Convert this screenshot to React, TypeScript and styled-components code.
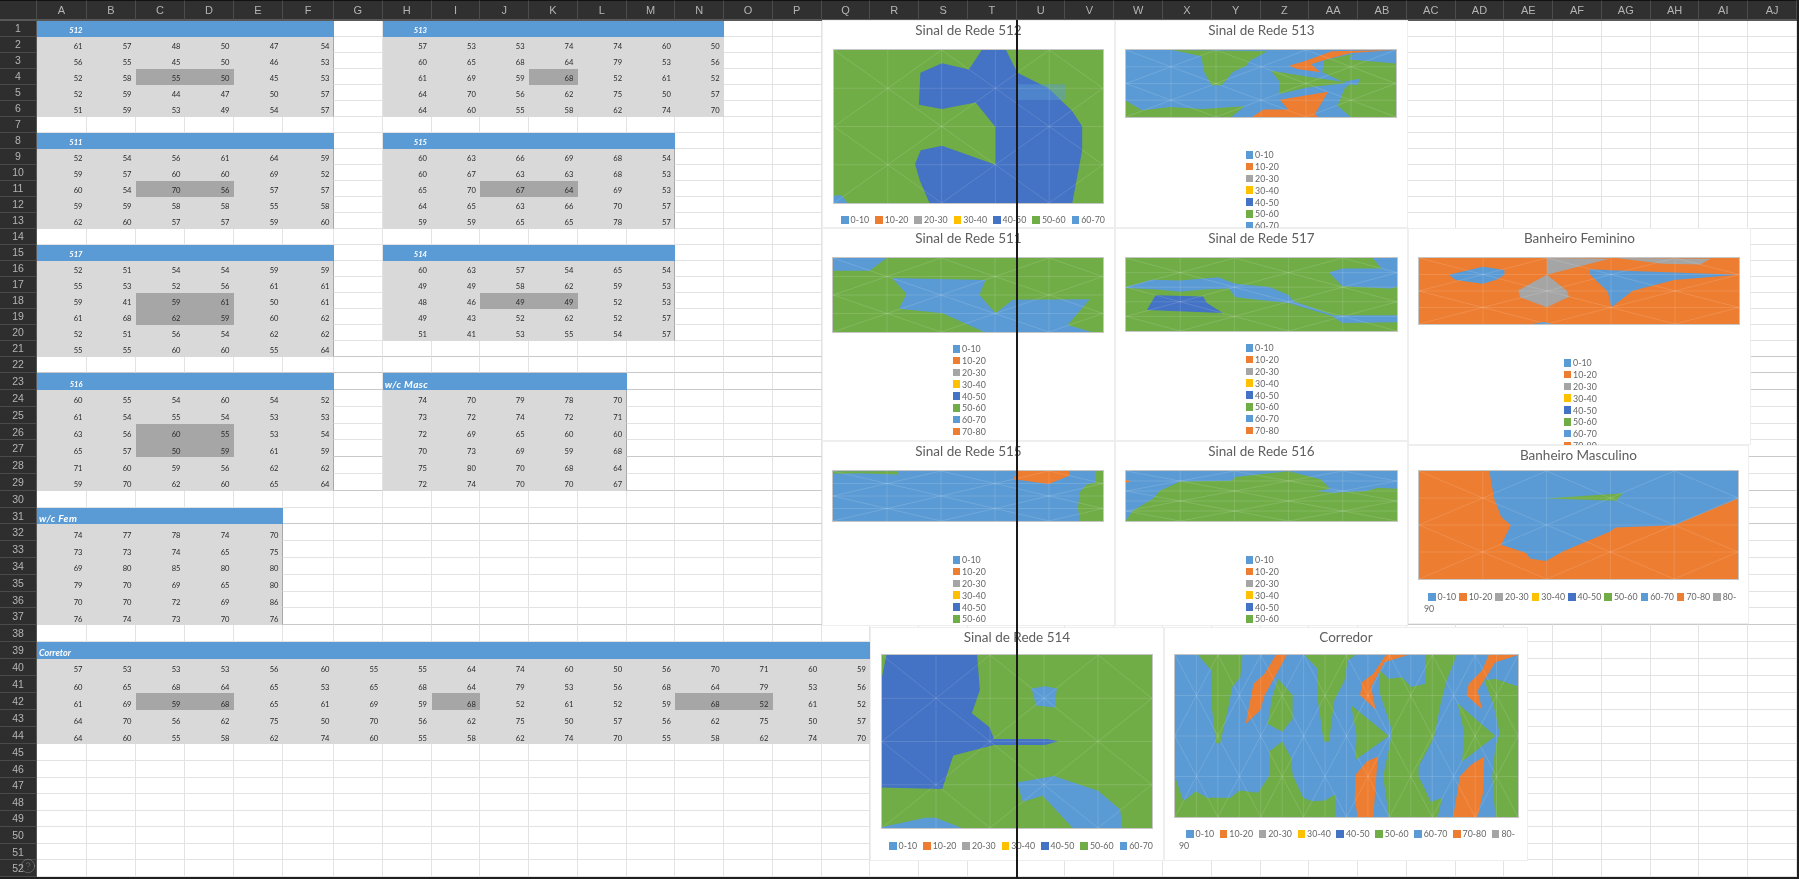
import React from 'react';
import styled, { createGlobalStyle } from 'styled-components';
import { CircleHelp } from 'lucide-react';

type Tone = 'blank' | 'band' | 'data' | 'mark';

type Block = {
  label: string;
  row: number;
  col: number;
  labelLeft?: boolean;
  labelSize?: number;
  labelSpacing?: number;
  edge?: boolean;
  values: number[][];
  marks: [number, number][];
};

type Shape = { fill: string; points: string; opacity?: number };

type ChartSpec = {
  title: string;
  x: number;
  y: number;
  w: number;
  h: number;
  plot: { x: number; y: number; w: number; h: number };
  view: [number, number, number, number];
  cells: [number, number];
  background: string;
  shapes: Shape[];
  legend: { top: number; x?: number; count: number; gap?: number; indent?: number; right?: number };
};

const BLUE = '#5b9bd5';
const ORANGE = '#ed7d31';
const GREY = '#a5a5a5';
const GOLD = '#ffc000';
const NAVY = '#4472c4';
const GREEN = '#70ad47';

const COLUMNS = Array.from({ length: 36 }, (_, i) =>
  i < 26 ? String.fromCharCode(65 + i) : 'A' + String.fromCharCode(65 + i - 26),
);
const ROW_COUNT = 52;
const HEAVY_ROWS = [21, 22, 23, 27, 29, 31, 37];

const LEGEND: [string, string][] = [
  ['0-10', BLUE],
  ['10-20', ORANGE],
  ['20-30', GREY],
  ['30-40', GOLD],
  ['40-50', NAVY],
  ['50-60', GREEN],
  ['60-70', BLUE],
  ['70-80', ORANGE],
  ['80-90', GREY],
];

const BLOCKS: Block[] = [
  {
    label: '512', row: 1, col: 1, edge: true, marks: [[2, 2], [2, 3]],
    values: [
      [61, 57, 48, 50, 47, 54],
      [56, 55, 45, 50, 46, 53],
      [52, 58, 55, 50, 45, 53],
      [52, 59, 44, 47, 50, 57],
      [51, 59, 53, 49, 54, 57],
    ],
  },
  {
    label: '513', row: 1, col: 8, marks: [[2, 3]],
    values: [
      [57, 53, 53, 74, 74, 60, 50],
      [60, 65, 68, 64, 79, 53, 56],
      [61, 69, 59, 68, 52, 61, 52],
      [64, 70, 56, 62, 75, 50, 57],
      [64, 60, 55, 58, 62, 74, 70],
    ],
  },
  {
    label: '511', row: 8, col: 1, edge: true, marks: [[2, 2], [2, 3]],
    values: [
      [52, 54, 56, 61, 64, 59],
      [59, 57, 60, 60, 69, 52],
      [60, 54, 70, 56, 57, 57],
      [59, 59, 58, 58, 55, 58],
      [62, 60, 57, 57, 59, 60],
    ],
  },
  {
    label: '515', row: 8, col: 8, edge: true, marks: [[2, 2], [2, 3]],
    values: [
      [60, 63, 66, 69, 68, 54],
      [60, 67, 63, 63, 68, 53],
      [65, 70, 67, 64, 69, 53],
      [64, 65, 63, 66, 70, 57],
      [59, 59, 65, 65, 78, 57],
    ],
  },
  {
    label: '517', row: 15, col: 1, edge: true, marks: [[2, 2], [2, 3], [3, 2], [3, 3]],
    values: [
      [52, 51, 54, 54, 59, 59],
      [55, 53, 52, 56, 61, 61],
      [59, 41, 59, 61, 50, 61],
      [61, 68, 62, 59, 60, 62],
      [52, 51, 56, 54, 62, 62],
      [55, 55, 60, 60, 55, 64],
    ],
  },
  {
    label: '514', row: 15, col: 8, edge: true, marks: [[2, 2], [2, 3]],
    values: [
      [60, 63, 57, 54, 65, 54],
      [49, 49, 58, 62, 59, 53],
      [48, 46, 49, 49, 52, 53],
      [49, 43, 52, 62, 52, 57],
      [51, 41, 53, 55, 54, 57],
    ],
  },
  {
    label: '516', row: 23, col: 1, edge: true, marks: [[2, 2], [2, 3], [3, 2], [3, 3]],
    values: [
      [60, 55, 54, 60, 54, 52],
      [61, 54, 55, 54, 53, 53],
      [63, 56, 60, 55, 53, 54],
      [65, 57, 50, 59, 61, 59],
      [71, 60, 59, 56, 62, 62],
      [59, 70, 62, 60, 65, 64],
    ],
  },
  {
    label: 'w/c Masc', row: 23, col: 8, labelLeft: true, labelSize: 10, labelSpacing: 0.4, edge: true, marks: [],
    values: [
      [74, 70, 79, 78, 70],
      [73, 72, 74, 72, 71],
      [72, 69, 65, 60, 60],
      [70, 73, 69, 59, 68],
      [75, 80, 70, 68, 64],
      [72, 74, 70, 70, 67],
    ],
  },
  {
    label: 'w/c Fem', row: 31, col: 1, labelLeft: true, labelSize: 10, labelSpacing: 0.4, edge: true, marks: [],
    values: [
      [74, 77, 78, 74, 70],
      [73, 73, 74, 65, 75],
      [69, 80, 85, 80, 80],
      [79, 70, 69, 65, 80],
      [70, 70, 72, 69, 86],
      [76, 74, 73, 70, 76],
    ],
  },
  {
    label: 'Corretor', row: 39, col: 1, labelLeft: true, labelSize: 9,
    marks: [[2, 2], [2, 3], [2, 8], [2, 13], [2, 14]],
    values: [
      [57, 53, 53, 53, 56, 60, 55, 55, 64, 74, 60, 50, 56, 70, 71, 60, 59],
      [60, 65, 68, 64, 65, 53, 65, 68, 64, 79, 53, 56, 68, 64, 79, 53, 56],
      [61, 69, 59, 68, 65, 61, 69, 59, 68, 52, 61, 52, 59, 68, 52, 61, 52],
      [64, 70, 56, 62, 75, 50, 70, 56, 62, 75, 50, 57, 56, 62, 75, 50, 57],
      [64, 60, 55, 58, 62, 74, 60, 55, 58, 62, 74, 70, 55, 58, 62, 74, 70],
    ],
  },
];

const CHARTS: ChartSpec[] = [
  {
    title: 'Sinal de Rede 512', x: 822, y: 20, w: 293, h: 208,
    plot: { x: 833, y: 49, w: 271, h: 155 }, view: [59, 146, 710, 464], cells: [5, 4],
    background: GREEN,
    shapes: [
      { fill: NAVY, points: '449,146 513,146 543,215 625,262 687,330 714,378 714,450 688,610 311,610 285,540 273,492 288,450 344,436 484,493 484,378 433,305 344,325 283,312 287,215 344,186 415,205' },
      { fill: BLUE, points: '59,588 78,586 95,610 59,610' },
      { fill: BLUE, opacity: 0.45, points: '540,250 670,250 670,298 540,298' },
    ],
    legend: { top: 220, x: 841, count: 7, gap: 6 },
  },
  {
    title: 'Sinal de Rede 513', x: 1115, y: 20, w: 293, h: 208,
    plot: { x: 1125, y: 49, w: 272, h: 69 }, view: [823, 146, 711, 207], cells: [6, 4],
    background: BLUE,
    shapes: [
      { fill: GREEN, points: '945,146 1195,150 1148,180 1140,195 1105,213 1075,255 1048,255 1027,210 1022,165' },
      { fill: GREEN, points: '1205,210 1300,228 1410,247 1300,262 1225,282 1228,245' },
      { fill: GREEN, points: '1345,178 1420,158 1410,175 1534,188 1534,353 1415,353 1380,318 1400,262 1440,235 1395,245 1340,215' },
      { fill: BLUE, points: '1395,245 1440,235 1432,255 1410,250' },
      { fill: GREEN, points: '823,303 865,332 940,322 1025,328 1135,320 1100,353 823,353' },
      { fill: ORANGE, points: '1252,195 1295,180 1365,150 1534,146 1415,155 1350,175 1310,190 1335,215 1275,205' },
      { fill: ORANGE, points: '1228,300 1355,275 1320,345 1330,353 1155,353 1185,330 1250,330' },
    ],
    legend: { top: 155, count: 8 },
  },
  {
    title: 'Sinal de Rede 511', x: 822, y: 228, w: 293, h: 213,
    plot: { x: 832, y: 257, w: 272, h: 76 }, view: [31, 110, 712, 230], cells: [5, 4],
    background: GREEN,
    shapes: [
      { fill: BLUE, points: '31,110 172,110 128,150 31,150' },
      { fill: BLUE, points: '187,172 433,178 417,225 460,282 505,240 708,238 650,318 713,340 430,340 320,282 205,268 225,222' },
    ],
    legend: { top: 349, count: 8 },
  },
  {
    title: 'Sinal de Rede 517', x: 1115, y: 228, w: 293, h: 213,
    plot: { x: 1125, y: 257, w: 273, h: 75 }, view: [797, 110, 714, 227], cells: [5, 5],
    background: GREEN,
    shapes: [
      { fill: BLUE, points: '1447,110 1511,110 1511,200 1495,205 1367,198 1332,155 1367,143 1470,143' },
      { fill: BLUE, points: '797,200 865,178 940,180 1040,170 1085,190 1175,200 1225,225 1240,245 1345,288 1511,288 1511,310 1367,312 1340,290 1225,250 1085,232 1068,205 1000,208 940,215 880,208 797,203' },
      { fill: NAVY, points: '875,226 1000,230 1010,250 1052,281 852,272' },
    ],
    legend: { top: 348, count: 8 },
  },
  {
    title: 'Sinal de Rede 515', x: 822, y: 441, w: 293, h: 185,
    plot: { x: 832, y: 470, w: 272, h: 52 }, view: [31, 749, 712, 158], cells: [5, 4],
    background: BLUE,
    shapes: [
      { fill: GREEN, points: '31,750 200,750 205,760 100,756 31,758' },
      { fill: ORANGE, points: '515,749 655,749 655,763 600,790 507,775' },
      { fill: GREEN, points: '722,749 743,749 743,907 682,907 677,865 682,815 700,792 722,785' },
    ],
    legend: { top: 560, count: 8 },
  },
  {
    title: 'Sinal de Rede 516', x: 1115, y: 441, w: 293, h: 185,
    plot: { x: 1125, y: 470, w: 273, h: 52 }, view: [797, 749, 714, 158], cells: [5, 5],
    background: GREEN,
    shapes: [
      { fill: BLUE, points: '797,749 1511,749 1511,805 1460,802 1430,812 1340,818 1300,812 1335,805 1310,775 1225,750 1085,768 1075,780 940,782 885,812 870,835 815,875 797,905' },
      { fill: ORANGE, points: '797,777 810,781 797,786' },
    ],
    legend: { top: 560, count: 8 },
  },
  {
    title: 'Banheiro Feminino', x: 1408, y: 228, w: 343, h: 217,
    plot: { x: 1418, y: 257, w: 322, h: 68 }, view: [55, 170, 966, 205], cells: [5, 4],
    background: ORANGE,
    shapes: [
      { fill: GREY, points: '441,170 630,172 441,222' },
      { fill: GREY, points: '650,170 935,172 905,190 790,188' },
      { fill: GREY, points: '441,222 500,270 508,290 441,323 360,292 355,270' },
      { fill: BLUE, points: '145,222 248,197 313,207 313,222 290,237 248,250 165,238' },
      { fill: BLUE, points: '570,205 635,208 1018,222 825,238 700,272 636,323 625,275 572,222' },
      { fill: BLUE, points: '395,375 433,369 458,375' },
    ],
    legend: { top: 363, count: 8 },
  },
  {
    title: 'Banheiro Masculino', x: 1408, y: 445, w: 341, h: 179,
    plot: { x: 1418, y: 470, w: 321, h: 110 }, view: [55, 809, 962, 331], cells: [5, 4],
    background: ORANGE,
    shapes: [
      { fill: BLUE, points: '267,809 1017,809 1017,893 825,975 648,982 630,995 490,1055 438,1085 390,1077 378,1060 303,1035 332,975 303,950 282,895' },
      { fill: GREEN, points: '438,893 670,877 650,900' },
    ],
    legend: { top: 597, x: 1424, count: 9, gap: 3, indent: 4, right: 11 },
  },
  {
    title: 'Sinal de Rede 514', x: 870, y: 627, w: 294, h: 234,
    plot: { x: 881, y: 654, w: 272, h: 175 }, view: [47, 103, 610, 525], cells: [5, 4],
    background: GREEN,
    shapes: [
      { fill: NAVY, points: '57,103 262,103 268,210 250,280 290,322 300,358 420,358 445,365 415,376 300,376 208,408 183,510 47,505 47,170' },
      { fill: BLUE, points: '385,205 415,198 442,205 437,262 395,256' },
      { fill: BLUE, points: '352,490 435,470 535,515 585,572 590,628 478,628 410,530 365,548' },
      { fill: BLUE, points: '47,625 145,597 168,597 228,628 47,628' },
    ],
    legend: { top: 846, x: 889, count: 7, gap: 6 },
  },
  {
    title: 'Corredor', x: 1164, y: 627, w: 364, h: 234,
    plot: { x: 1174, y: 654, w: 345, h: 164 }, view: [703, 103, 773, 490], cells: [16, 4],
    background: BLUE,
    shapes: [
      { fill: GREEN, points: '755,103 855,103 850,170 832,200 825,250 805,370 795,370 785,250 785,150' },
      { fill: GREEN, points: '703,470 722,545 750,515 775,535 828,535 848,513 890,520 915,470 915,395 945,365 965,415 968,465 992,535 1012,545 1040,543 1065,525 1065,593 703,593' },
      { fill: GREEN, points: '935,175 968,225 968,295 945,335 912,312 922,230' },
      { fill: GREEN, points: '995,103 1110,103 1092,120 1085,180 1062,240 1050,365 1038,365 1025,240 1025,145' },
      { fill: GREEN, points: '1100,255 1185,348 1110,420 1112,345' },
      { fill: GREEN, points: '1165,150 1185,175 1215,170 1235,200 1268,190 1268,103 1338,103 1315,180 1300,260 1288,345 1282,365 1252,440 1252,470 1280,548 1305,535 1295,593 1185,593 1172,470 1188,370 1192,330 1165,220' },
      { fill: GREEN, points: '1340,250 1425,348 1350,425 1355,340' },
      { fill: GREEN, points: '1400,180 1425,175 1476,198 1476,593 1425,593 1418,470 1425,380 1435,340 1420,250' },
      { fill: ORANGE, points: '930,103 955,103 905,225 895,270 862,312 880,190 905,160' },
      { fill: ORANGE, points: '1178,103 1228,103 1175,125 1145,200 1155,268 1120,225 1125,185 1150,160' },
      { fill: ORANGE, points: '1160,410 1155,500 1150,593 1115,593 1108,540 1110,465 1135,425' },
      { fill: ORANGE, points: '1410,103 1476,103 1425,125 1385,210 1395,268 1360,225 1365,190 1395,150' },
      { fill: ORANGE, points: '1400,410 1398,515 1385,593 1330,593 1345,470 1370,435' },
    ],
    legend: { top: 834, x: 1179, count: 9, gap: 5.6, indent: 7 },
  },
];

const GlobalStyle = createGlobalStyle`
  html, body {
    margin: 0;
    background: #2b2b2b;
    overflow: hidden;
  }
`;

const Sheet = styled.div`
  position: relative;
  width: 1799px;
  height: 879px;
  overflow: hidden;
  background: #1f1f1f;
  font-family: Lato, "Liberation Sans", sans-serif;
  filter: blur(0.35px);
`;

const Grid = styled.div`
  display: grid;
  grid-template-columns: 37px 50px repeat(4, 49px) 51px repeat(30, 48.77px);
  grid-template-rows: 20.5px repeat(21, 16px) repeat(18, 16.8px) repeat(5, 17.1px) repeat(8, 16.6px);
`;

const Corner = styled.div`
  background: #2f2f2f;
  border-top: 1px solid #111;
  border-right: 1px solid #4c4c4c;
  border-bottom: 2px solid #585858;
`;

const ColumnHead = styled.div`
  display: flex;
  align-items: center;
  justify-content: center;
  background: #303030;
  border-top: 1px solid #111;
  border-right: 1px solid #4c4c4c;
  border-bottom: 2px solid #585858;
  color: #b4b4b4;
  font: 11px "Liberation Sans", sans-serif;
`;

const RowHead = styled.div`
  display: flex;
  align-items: center;
  justify-content: center;
  background: #2e2e2e;
  border-right: 1px solid #585858;
  border-bottom: 1px solid #4a4a4a;
  color: #b4b4b4;
  font: 10.5px "Liberation Sans", sans-serif;
`;

const toneColors: Record<Tone, string> = {
  blank: '#fff',
  band: BLUE,
  data: '#d9d9d9',
  mark: '#a6a6a6',
};

type CellProps = {
  $tone: Tone;
  $heavy: boolean;
  $edge: boolean;
  $labelLeft: boolean;
  $size: number;
  $spacing: number;
};

const Cell = styled.div<CellProps>`
  display: flex;
  align-items: flex-end;
  justify-content: ${(p) => (p.$labelLeft ? 'flex-start' : 'flex-end')};
  min-width: 0;
  box-sizing: border-box;
  padding: 0 ${(p) => (p.$labelLeft ? 0 : 3.5)}px 0.5px ${(p) => (p.$labelLeft ? 2 : 0)}px;
  background: ${(p) => toneColors[p.$tone]};
  border-right: 1px solid
    ${(p) => (p.$edge ? '#a8a8a8' : p.$tone === 'blank' ? '#e3e3e3' : 'transparent')};
  border-bottom: 1px solid
    ${(p) => (p.$tone !== 'blank' ? 'transparent' : p.$heavy ? '#c9c9c9' : '#e3e3e3')};
  color: ${(p) => (p.$tone === 'band' ? '#fff' : '#2a2a2a')};
  font-size: ${(p) => p.$size}px;
  font-style: ${(p) => (p.$tone === 'band' ? 'italic' : 'normal')};
  font-weight: ${(p) => (p.$tone === 'band' ? 700 : 400)};
  letter-spacing: ${(p) => p.$spacing}px;
  line-height: 9px;
  white-space: nowrap;
`;

const ChartFrame = styled.section<{ $x: number; $y: number; $w: number; $h: number }>`
  position: absolute;
  left: ${(p) => p.$x}px;
  top: ${(p) => p.$y}px;
  width: ${(p) => p.$w}px;
  height: ${(p) => p.$h}px;
  overflow: hidden;
  background: #fff;
  box-shadow: inset 0 0 0 1px #eeeeee;
`;

const ChartTitle = styled.h2`
  height: 20px;
  margin: 0;
  color: #5e5e5e;
  font-size: 13.5px;
  font-weight: 400;
  line-height: 20px;
  text-align: center;
`;

const PlotBox = styled.div<{ $left: number; $top: number; $w: number; $h: number }>`
  box-sizing: border-box;
  width: ${(p) => p.$w}px;
  height: ${(p) => p.$h}px;
  margin: ${(p) => p.$top}px 0 0 ${(p) => p.$left}px;
  border: 1px solid #c6c6c6;
  svg {
    display: block;
    width: 100%;
    height: 100%;
  }
`;

const StackedLegend = styled.ul<{ $top: number }>`
  display: flex;
  flex-direction: column;
  align-items: flex-start;
  width: 32px;
  margin: ${(p) => p.$top}px auto 0;
  padding: 0;
  list-style: none;
`;

const StackedItem = styled.li`
  display: flex;
  align-items: center;
  height: 11.8px;
  color: #666;
  font-size: 8.8px;
  white-space: nowrap;
`;

const FlowLegend = styled.ul<{
  $top: number;
  $left: number;
  $right: number;
  $indent: number;
  $single: boolean;
}>`
  margin: ${(p) => p.$top}px ${(p) => p.$right}px 0 ${(p) => p.$left}px;
  padding: 0;
  list-style: none;
  color: #666;
  font-size: 8.8px;
  line-height: 12px;
  text-indent: ${(p) => p.$indent}px;
  white-space: ${(p) => (p.$single ? 'nowrap' : 'normal')};
`;

const FlowItem = styled.li<{ $gap: number }>`
  display: inline;
  margin-right: ${(p) => p.$gap}px;
`;

const Swatch = styled.span<{ $color: string }>`
  display: inline-block;
  flex: none;
  width: 7.6px;
  height: 7.6px;
  margin-right: 2px;
  background: ${(p) => p.$color};
  vertical-align: -0.5px;
`;

const CursorLine = styled.div`
  position: absolute;
  left: 1016px;
  top: 20px;
  bottom: 0;
  width: 1.5px;
  background: #1a1a1a;
`;

const HelpMark = styled.div`
  position: absolute;
  left: 20px;
  top: 858px;
  color: rgba(160, 160, 160, 0.55);
  line-height: 0;
`;

type CellInfo = {
  tone: Tone;
  text?: string;
  edge?: boolean;
  labelLeft?: boolean;
  size?: number;
  spacing?: number;
};

const buildCellMap = () => {
  const cells = new Map<string, CellInfo>();
  BLOCKS.forEach((block) => {
    const width = block.values[0].length;
    for (let c = 0; c < width; c++) {
      cells.set(`${block.row}:${block.col + c}`, {
        tone: 'band',
        text: c === 0 ? block.label : undefined,
        labelLeft: c === 0 && block.labelLeft,
        size: block.labelSize,
        spacing: block.labelSpacing,
      });
    }
    block.values.forEach((line, r) => {
      line.forEach((value, c) => {
        const marked = block.marks.some(([mr, mc]) => mr === r && mc === c);
        cells.set(`${block.row + r + 1}:${block.col + c}`, {
          tone: marked ? 'mark' : 'data',
          text: String(value),
          edge: block.edge && c === width - 1,
        });
      });
    });
  });
  return cells;
};

const CELL_MAP = buildCellMap();

const Wireframe = ({ view, cells }: { view: ChartSpec['view']; cells: [number, number] }) => {
  const [vx, vy, vw, vh] = view;
  const [cols, rows] = cells;
  const dx = vw / cols;
  const dy = vh / rows;
  const lines: [number, number, number, number][] = [];
  for (let i = 1; i < cols; i++) lines.push([vx + i * dx, vy, vx + i * dx, vy + vh]);
  for (let j = 1; j < rows; j++) lines.push([vx, vy + j * dy, vx + vw, vy + j * dy]);
  for (let i = 0; i < cols; i++) {
    for (let j = 0; j < rows; j++) {
      const x = vx + i * dx;
      const y = vy + j * dy;
      if ((i + j) % 2 === 0) lines.push([x, y, x + dx, y + dy]);
      else lines.push([x, y + dy, x + dx, y]);
    }
  }
  return (
    <g stroke="#fff" strokeOpacity="0.13">
      {lines.map(([x1, y1, x2, y2], i) => (
        <line key={i} x1={x1} y1={y1} x2={x2} y2={y2} vectorEffect="non-scaling-stroke" />
      ))}
    </g>
  );
};

const Legend = ({ chart }: { chart: ChartSpec }) => {
  const { legend, plot, x } = chart;
  const plotBottom = plot.y + plot.h;
  const margin = legend.top - 6 - plotBottom;
  const items = LEGEND.slice(0, legend.count);
  if (legend.x === undefined) {
    return (
      <StackedLegend $top={margin}>
        {items.map(([name, color]) => (
          <StackedItem key={name}>
            <Swatch $color={color} />
            {name}
          </StackedItem>
        ))}
      </StackedLegend>
    );
  }
  return (
    <FlowLegend
      $top={margin}
      $left={legend.x - x}
      $right={legend.right ?? 0}
      $indent={legend.indent ?? 0}
      $single={legend.count < 9}
    >
      {items.map(([name, color], i) => {
        const [from, to] = name.split('-');
        return (
          <FlowItem key={name} $gap={legend.gap ?? 0}>
            <Swatch $color={color} />
            {/* only the last label wraps, after its hyphen, the way Excel does it */}
            {i === 8 ? (
              <>
                {from}-<wbr />
                {to}
              </>
            ) : (
              name
            )}
          </FlowItem>
        );
      })}
    </FlowLegend>
  );
};

const Chart = ({ chart }: { chart: ChartSpec }) => {
  const { plot, view } = chart;
  return (
    <ChartFrame $x={chart.x} $y={chart.y} $w={chart.w} $h={chart.h}>
      <ChartTitle>{chart.title}</ChartTitle>
      <PlotBox $left={plot.x - chart.x} $top={plot.y - chart.y - 20} $w={plot.w} $h={plot.h}>
        <svg viewBox={view.join(' ')} preserveAspectRatio="none">
          <rect x={view[0]} y={view[1]} width={view[2]} height={view[3]} fill={chart.background} />
          {chart.shapes.map((shape, i) => (
            <polygon key={i} fill={shape.fill} fillOpacity={shape.opacity} points={shape.points} />
          ))}
          <Wireframe view={view} cells={chart.cells} />
        </svg>
      </PlotBox>
      <Legend chart={chart} />
    </ChartFrame>
  );
};

export default function App() {
  const rows = Array.from({ length: ROW_COUNT }, (_, i) => i + 1);
  return (
    <Sheet>
      <GlobalStyle />
      <Grid>
        <Corner />
        {COLUMNS.map((name) => (
          <ColumnHead key={name}>{name}</ColumnHead>
        ))}
        {rows.map((row) => (
          <React.Fragment key={row}>
            <RowHead>{row}</RowHead>
            {COLUMNS.map((name, c) => {
              const cell = CELL_MAP.get(`${row}:${c + 1}`);
              return (
                <Cell
                  key={name}
                  $tone={cell?.tone ?? 'blank'}
                  $heavy={HEAVY_ROWS.includes(row)}
                  $edge={!!cell?.edge}
                  $labelLeft={!!cell?.labelLeft}
                  $size={cell?.size ?? 7.6}
                  $spacing={cell?.spacing ?? 0}
                >
                  {cell?.text}
                </Cell>
              );
            })}
          </React.Fragment>
        ))}
      </Grid>
      {CHARTS.map((chart) => (
        <Chart key={chart.title} chart={chart} />
      ))}
      <CursorLine />
      <HelpMark>
        <CircleHelp size={16} strokeWidth={1.2} />
      </HelpMark>
    </Sheet>
  );
}
